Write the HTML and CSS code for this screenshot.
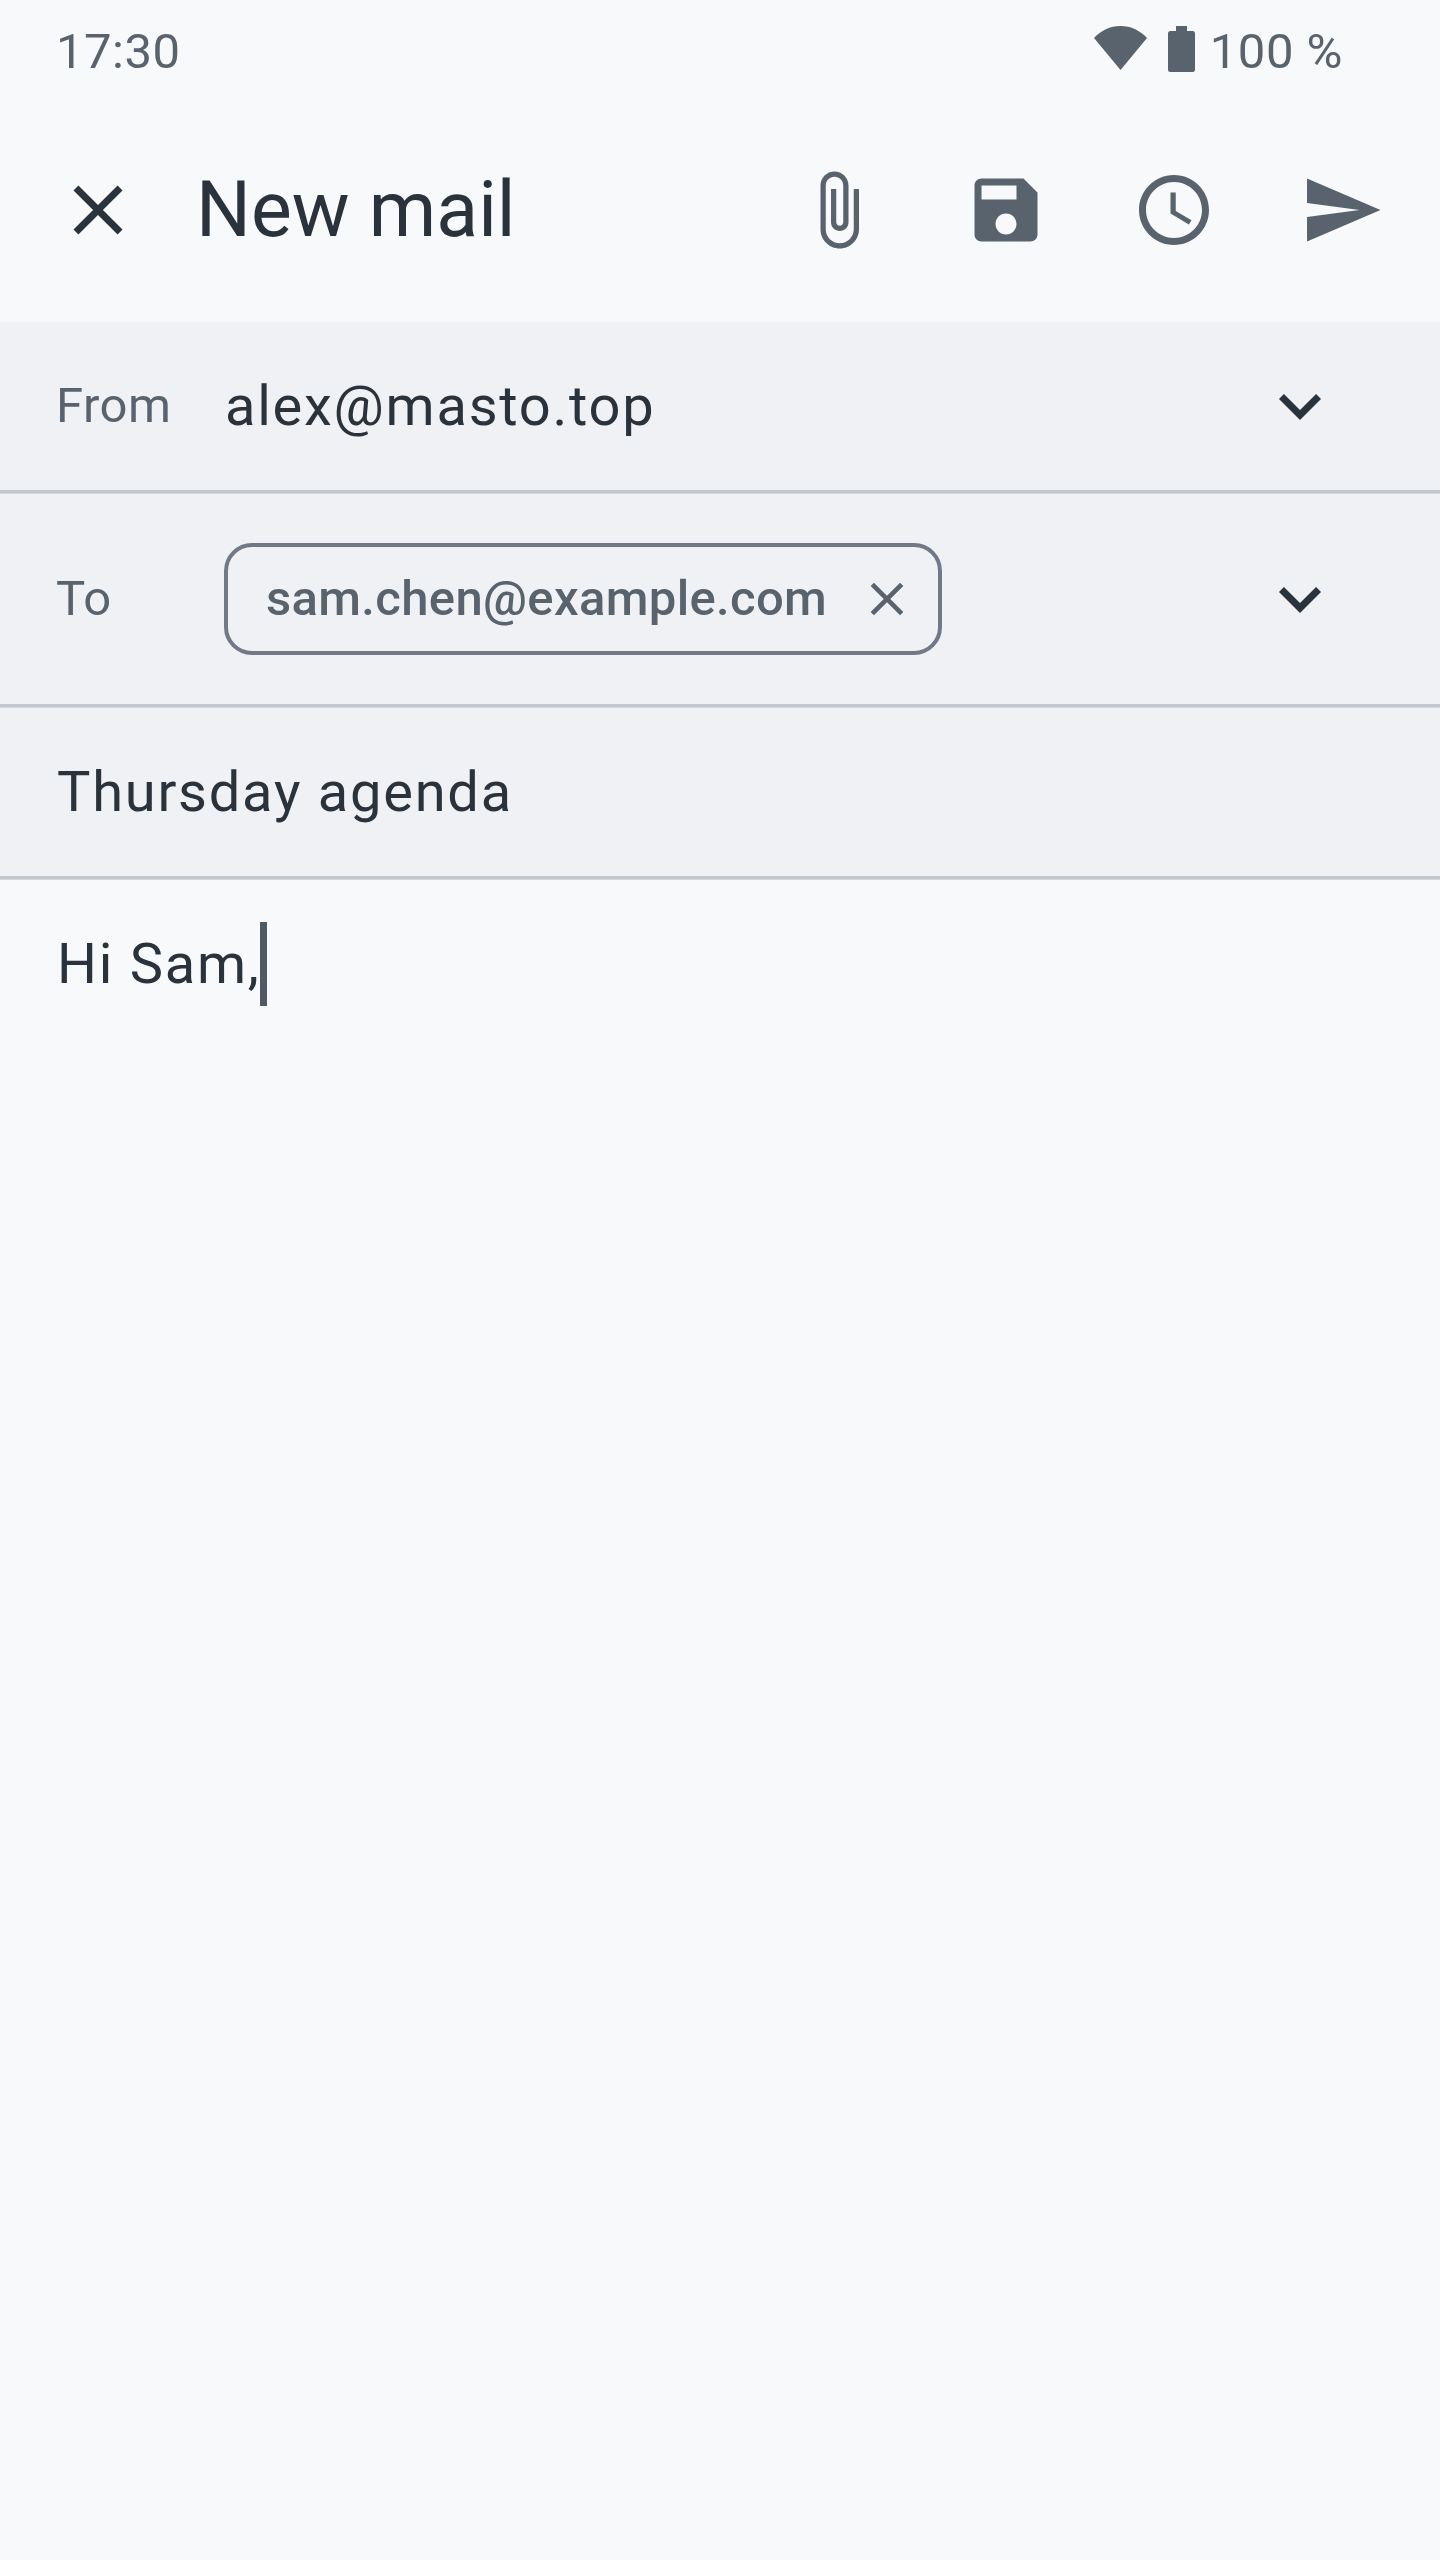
FILE: index.html
```html
<!DOCTYPE html>
<html lang="en">
<head>
<meta charset="utf-8">
<title>New mail</title>
<link rel="stylesheet" href="styles.css">
</head>
<body>
<main class="screen">
  <div class="status">
    <span class="status-time">17:30</span>
    <div class="status-right">
      <svg class="wifi" viewBox="0 0 53 44"><path d="M26.5 44 0 12C7 4.500 16 0 26.500 0S46 4.500 53 12z"/></svg>
      <svg class="battery" viewBox="0 0 27 46"><path d="M8 0h11v5h5.500A2.500 2.500 0 0 1 27 7.500V43.500A2.500 2.500 0 0 1 24.500 46H2.500A2.500 2.500 0 0 1 0 43.500V7.500A2.500 2.500 0 0 1 2.500 5H8z"/></svg>
      <span class="status-level">100 %</span>
    </div>
  </div>

  <header class="toolbar">
    <button class="icon-btn dark" aria-label="Close"><svg viewBox="0 0 24 24"><path d="M19 6.410 17.590 5 12 10.590 6.410 5 5 6.410 10.590 12 5 17.590 6.410 19 12 13.410 17.590 19 19 17.590 13.410 12z"/></svg></button>
    <h1 class="title">New mail</h1>
    <button class="icon-btn" aria-label="Attach"><svg viewBox="0 0 24 24"><path d="M16.500 6v11.500c0 2.210-1.790 4-4 4s-4-1.790-4-4V5c0-1.380 1.120-2.500 2.500-2.500s2.500 1.120 2.500 2.500v10.500c0 .55-.45 1-1 1s-1-.45-1-1V6H10v9.500c0 1.380 1.120 2.500 2.500 2.500s2.500-1.120 2.500-2.500V5c0-2.210-1.790-4-4-4S7 2.790 7 5v12.500c0 3.040 2.460 5.500 5.500 5.500s5.500-2.460 5.500-5.500V6h-1.500z"/></svg></button>
    <button class="icon-btn" aria-label="Save"><svg viewBox="0 0 24 24"><path d="M17 3H5c-1.110 0-2 .9-2 2v14c0 1.100.89 2 2 2h14c1.100 0 2-.9 2-2V7l-4-4zm-5 16c-1.660 0-3-1.340-3-3s1.340-3 3-3 3 1.340 3 3-1.340 3-3 3zm3-10H5V5h10v4z"/></svg></button>
    <button class="icon-btn" aria-label="Schedule"><svg viewBox="0 0 24 24"><path d="M11.990 2C6.470 2 2 6.480 2 12s4.470 10 9.990 10C17.520 22 22 17.520 22 12S17.520 2 11.990 2zM12 20c-4.420 0-8-3.580-8-8s3.580-8 8-8 8 3.580 8 8-3.580 8-8 8z"/><path d="M12.500 7H11v6l5.250 3.150.75-1.230-4.500-2.670z"/></svg></button>
    <button class="icon-btn" aria-label="Send"><svg viewBox="0 0 24 24"><path d="M2.010 21 23 12 2.010 3 2 10l15 2-15 2z"/></svg></button>
  </header>

  <section class="field field-from">
    <span class="label">From</span>
    <span class="value from-value">alex@masto.top</span>
    <svg class="chevron" viewBox="0 0 24 24"><path d="M7.410 8.590 12 13.170l4.590-4.580L18 10l-6 6-6-6 1.410-1.410z"/></svg>
  </section>
  <div class="rule"></div>
  <section class="field field-to">
    <span class="label">To</span>
    <div class="chip">
      <span class="chip-text">sam.chen@example.com</span>
      <svg class="chip-close" viewBox="0 0 24 24"><path d="M19 6.410 17.590 5 12 10.590 6.410 5 5 6.410 10.590 12 5 17.590 6.410 19 12 13.410 17.590 19 19 17.590 13.410 12z"/></svg>
    </div>
    <svg class="chevron" viewBox="0 0 24 24"><path d="M7.410 8.590 12 13.170l4.590-4.580L18 10l-6 6-6-6 1.410-1.410z"/></svg>
  </section>
  <div class="rule"></div>
  <section class="field field-subject">
    <span class="value">Thursday agenda</span>
  </section>
  <div class="rule"></div>
  <section class="body-text">
    <span class="value greeting">Hi Sam,</span><span class="caret"></span>
  </section>
</main>
</body>
</html>
```

FILE: styles.css
```css
* { box-sizing: border-box; }
html, body { margin: 0; padding: 0; background: #f7f9fa; }
body { font-family: Roboto, "Noto Sans", sans-serif; color: #2a323c; }

.screen { width: 1440px; min-height: 2560px; display: flex; flex-direction: column; background: #f7f9fa; }

.status { height: 98px; display: flex; align-items: flex-start; justify-content: space-between; padding: 24px 97px 0 56px; color: #59636e; font-size: 49px; letter-spacing: 0.500px; line-height: 56px; }
.status-right { display: flex; align-items: flex-start; }
.wifi { width: 53px; height: 44px; margin-top: 2px; margin-right: 21px; fill: #59636e; }
.battery { width: 27px; height: 46px; margin-top: 2px; margin-right: 15px; fill: #59636e; }

.toolbar { height: 224px; display: flex; align-items: center; padding: 0 14px; }
.title { flex: 1; margin: 0; padding-left: 14px; font-size: 77px; font-weight: 400; line-height: 100px; color: #2a323c; }
.icon-btn { width: 168px; height: 168px; padding: 0; border: 0; background: none; display: flex; align-items: center; justify-content: center; fill: #59636e; }
.icon-btn svg { width: 84px; height: 84px; display: block; }
.icon-btn.dark { fill: #2a323c; }

.field { display: flex; align-items: center; padding: 0 98px 0 56px; background: #f0f1f5; }
.field-from { height: 168px; }
.field-to { height: 210px; }
.field-subject { height: 168px; padding-left: 57px; }
.rule { height: 4px; background: #c2c7ce; border-bottom: 1px solid #d6d9de; }

.label { width: 168px; flex: none; margin-bottom: 2px; font-size: 49px; letter-spacing: 0.500px; color: #59636e; }
.value { font-size: 56px; letter-spacing: 1.750px; line-height: 70px; color: #2a323c; }
.from-value { margin-left: 1px; }
.chevron { width: 84px; height: 84px; margin-left: auto; fill: #2a323c; }

.chip { height: 112px; display: flex; align-items: center; padding: 0 23px 0 38px; border: 4px solid #707985; border-radius: 28px; }
.chip-text { margin-bottom: 2px; font-size: 49px; font-weight: 500; letter-spacing: 0.350px; color: #59636e; }
.chip-close { width: 56px; height: 56px; margin-left: 32px; fill: #59636e; }

.body-text { display: flex; align-items: flex-start; padding: 42px 57px 0; }
.greeting { margin-top: 7px; }
.caret { width: 7px; height: 84px; margin-left: -1px; background: #505a66; }
```
